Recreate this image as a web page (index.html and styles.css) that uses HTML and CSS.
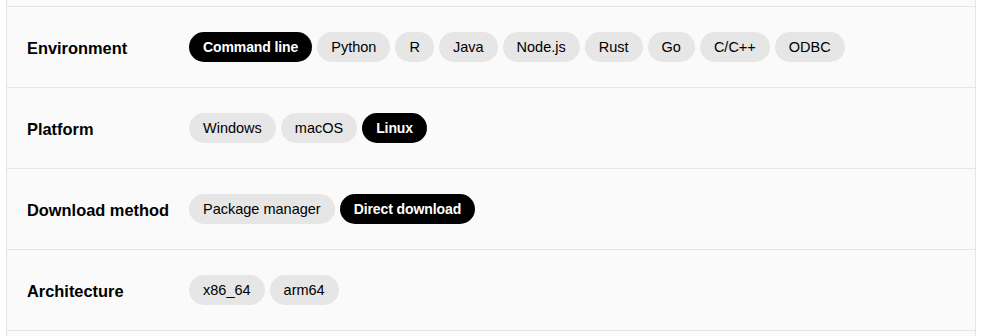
FILE: index.html
```html
<!DOCTYPE html>
<html>
<head>
<meta charset="utf-8">
<link rel="stylesheet" href="styles.css">
</head>
<body>
<div class="panel">
  <div class="row row-partial"></div>
  <div class="row">
    <div class="label">Environment</div>
    <div class="pills">
      <span class="pill active">Command line</span>
      <span class="pill">Python</span>
      <span class="pill">R</span>
      <span class="pill">Java</span>
      <span class="pill">Node.js</span>
      <span class="pill">Rust</span>
      <span class="pill">Go</span>
      <span class="pill">C/C++</span>
      <span class="pill">ODBC</span>
    </div>
  </div>
  <div class="row">
    <div class="label">Platform</div>
    <div class="pills">
      <span class="pill">Windows</span>
      <span class="pill">macOS</span>
      <span class="pill active">Linux</span>
    </div>
  </div>
  <div class="row">
    <div class="label">Download method</div>
    <div class="pills">
      <span class="pill">Package manager</span>
      <span class="pill active">Direct download</span>
    </div>
  </div>
  <div class="row">
    <div class="label">Architecture</div>
    <div class="pills">
      <span class="pill">x86_64</span>
      <span class="pill">arm64</span>
    </div>
  </div>
  <div class="row"></div>
</div>
</body>
</html>
```
FILE: styles.css
```css
html, body {
  margin: 0;
  padding: 0;
  background: #ffffff;
}
body {
  font-family: "Liberation Sans", Arial, sans-serif;
  color: #000;
  overflow: hidden;
  height: 336px;
}
.panel {
  margin: -74px 0 0 6px;
  width: 970px;
  box-sizing: border-box;
  background: #fafafa;
  border-left: 1px solid #e5e5e5;
  border-right: 1px solid #e5e5e5;
}
.row {
  height: 80px;
  border-bottom: 1px solid #e5e5e5;
  display: flex;
  align-items: center;
  padding-left: 20px;
}
.label {
  width: 162px;
  font-size: 16.4px;
  font-weight: bold;
  flex-shrink: 0;
  padding-top: 2px;
}
.pills {
  display: flex;
  gap: 5px;
  align-items: center;
}
.pill {
  display: inline-flex;
  align-items: center;
  height: 30px;
  padding: 0 14px;
  border-radius: 15px;
  background: #e6e6e6;
  font-size: 14.5px;
  color: #000;
  white-space: nowrap;
}
.pill.active {
  background: #000;
  color: #fff;
  font-size: 14px;
  font-weight: bold;
  letter-spacing: -0.1px;
}
```
